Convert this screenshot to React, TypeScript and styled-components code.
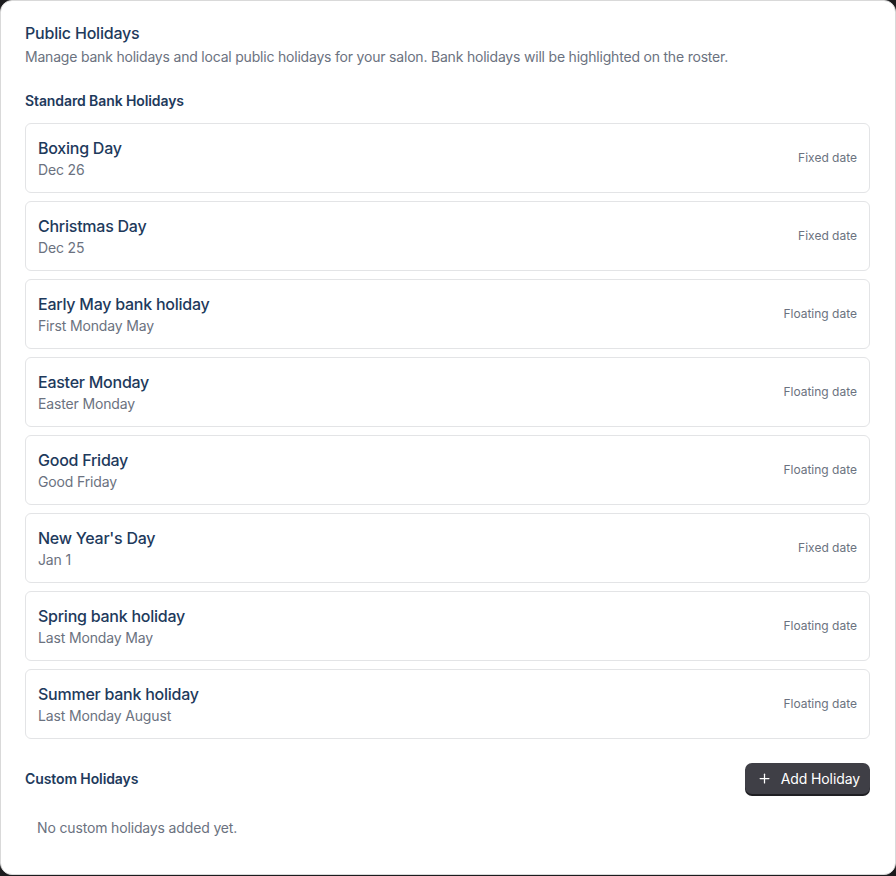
import styled, { createGlobalStyle } from "styled-components";
import { Plus } from "lucide-react";

const GlobalStyle = createGlobalStyle`
    html, body {
        margin: 0;
        padding: 0;
        background: #1c1c1e;
    }
    * {
        box-sizing: border-box;
    }
`;

const Panel = styled.div`
    width: 896px;
    height: 875px;
    background: #ffffff;
    border: 1px solid #d9d9d9;
    border-radius: 12px;
    padding: 20px 25px 0 24px;
    font-family: Inter, "Noto Sans", sans-serif;
    display: flex;
    flex-direction: column;
`;

const Title = styled.h2`
    margin: 0;
    font-size: 16px;
    line-height: 24px;
    font-weight: 500;
    letter-spacing: -0.2px;
    color: #1e3a5c;
`;

const Description = styled.p`
    margin: 2px 0 0 0;
    font-size: 14px;
    line-height: 20px;
    letter-spacing: -0.2px;
    color: #6b7280;
`;

const SectionHeading = styled.h3`
    margin: 0;
    font-size: 14px;
    line-height: 20px;
    font-weight: 600;
    letter-spacing: -0.1px;
    color: #1e3a5c;
`;

const Section = styled.section<{ $top: number }>`
    margin-top: ${(p) => p.$top}px;
    display: flex;
    flex-direction: column;
`;

const List = styled.div`
    margin-top: 12px;
    display: flex;
    flex-direction: column;
    gap: 8px;
`;

const HolidayCard = styled.div`
    display: flex;
    align-items: center;
    justify-content: space-between;
    padding: 12px;
    border: 1px solid #e3e4e6;
    border-radius: 6px;
    background: #ffffff;
`;

const HolidayName = styled.div`
    font-size: 16px;
    line-height: 24px;
    font-weight: 500;
    letter-spacing: -0.25px;
    color: #1e3a5c;
`;

const HolidayDate = styled.div`
    font-size: 14px;
    line-height: 20px;
    letter-spacing: -0.15px;
    color: #6b7280;
`;

const DateType = styled.span`
    font-size: 12px;
    line-height: 16px;
    color: #6b7280;
`;

const HeaderRow = styled.div`
    display: flex;
    align-items: center;
    justify-content: space-between;
`;

const AddButton = styled.button`
    display: flex;
    align-items: center;
    gap: 9px;
    height: 31px;
    padding: 0 10px 0 12px;
    border: none;
    border-radius: 7px;
    background: #3f3f46;
    box-shadow: 0 2px 0 #1f1f23;
    color: #ffffff;
    font-family: Inter, "Noto Sans", sans-serif;
    font-size: 14px;
    font-weight: 400;
    letter-spacing: -0.1px;
    cursor: pointer;
`;

const EmptyText = styled.p`
    margin: 12px 0 0 0;
    padding: 12px;
    font-size: 14px;
    line-height: 20px;
    letter-spacing: -0.15px;
    color: #6b7280;
`;

const holidays = [
    { name: "Boxing Day", date: "Dec 26", type: "Fixed date" },
    { name: "Christmas Day", date: "Dec 25", type: "Fixed date" },
    { name: "Early May bank holiday", date: "First Monday May", type: "Floating date" },
    { name: "Easter Monday", date: "Easter Monday", type: "Floating date" },
    { name: "Good Friday", date: "Good Friday", type: "Floating date" },
    { name: "New Year's Day", date: "Jan 1", type: "Fixed date" },
    { name: "Spring bank holiday", date: "Last Monday May", type: "Floating date" },
    { name: "Summer bank holiday", date: "Last Monday August", type: "Floating date" },
];

export default function App() {
    return (
        <>
            <GlobalStyle />
            <Panel>
                <Title>Public Holidays</Title>
                <Description>
                    Manage bank holidays and local public holidays for your salon. Bank holidays will be highlighted on the roster.
                </Description>

                <Section $top={24}>
                    <SectionHeading>Standard Bank Holidays</SectionHeading>
                    <List>
                        {holidays.map((h) => (
                            <HolidayCard key={h.name}>
                                <div>
                                    <HolidayName>{h.name}</HolidayName>
                                    <HolidayDate>{h.date}</HolidayDate>
                                </div>
                                <DateType>{h.type}</DateType>
                            </HolidayCard>
                        ))}
                    </List>
                </Section>

                <Section $top={24}>
                    <HeaderRow>
                        <SectionHeading>Custom Holidays</SectionHeading>
                        <AddButton>
                            <Plus size={15} strokeWidth={2} />
                            Add Holiday
                        </AddButton>
                    </HeaderRow>
                    <EmptyText>No custom holidays added yet.</EmptyText>
                </Section>
            </Panel>
        </>
    );
}
